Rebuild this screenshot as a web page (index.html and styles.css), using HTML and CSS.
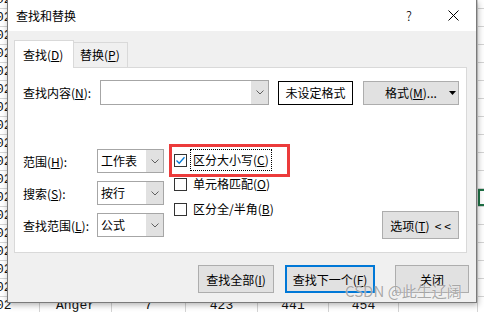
FILE: index.html
```html
<!DOCTYPE html>
<html lang="zh-CN">
<head>
    <meta charset="UTF-8">
    <title>查找和替换</title>
    <link rel="stylesheet" href="styles.css">
</head>
<body>
    <!-- Worksheet behind the dialog -->
    <div class="sheet">
        <div class="sheet-row"><div class="cell c0">02</div><div class="cell c1"></div><div class="cell c2"></div><div class="cell c3"></div><div class="cell c4"></div><div class="cell c5"></div><div class="cell c6"></div><div class="cell c7"></div></div>
        <div class="sheet-row"><div class="cell c0">02</div><div class="cell c1"></div><div class="cell c2"></div><div class="cell c3"></div><div class="cell c4"></div><div class="cell c5"></div><div class="cell c6"></div><div class="cell c7"></div></div>
        <div class="sheet-row"><div class="cell c0">02</div><div class="cell c1"></div><div class="cell c2"></div><div class="cell c3"></div><div class="cell c4"></div><div class="cell c5"></div><div class="cell c6"></div><div class="cell c7"></div></div>
        <div class="sheet-row"><div class="cell c0">02</div><div class="cell c1"></div><div class="cell c2"></div><div class="cell c3"></div><div class="cell c4"></div><div class="cell c5"></div><div class="cell c6"></div><div class="cell c7"></div></div>
        <div class="sheet-row"><div class="cell c0">02</div><div class="cell c1"></div><div class="cell c2"></div><div class="cell c3"></div><div class="cell c4"></div><div class="cell c5"></div><div class="cell c6"></div><div class="cell c7"></div></div>
        <div class="sheet-row"><div class="cell c0">02</div><div class="cell c1"></div><div class="cell c2"></div><div class="cell c3"></div><div class="cell c4"></div><div class="cell c5"></div><div class="cell c6"></div><div class="cell c7"></div></div>
        <div class="sheet-row"><div class="cell c0">02</div><div class="cell c1"></div><div class="cell c2"></div><div class="cell c3"></div><div class="cell c4"></div><div class="cell c5"></div><div class="cell c6"></div><div class="cell c7"></div></div>
        <div class="sheet-row"><div class="cell c0">02</div><div class="cell c1"></div><div class="cell c2"></div><div class="cell c3"></div><div class="cell c4"></div><div class="cell c5"></div><div class="cell c6"></div><div class="cell c7"></div></div>
        <div class="sheet-row"><div class="cell c0">02</div><div class="cell c1"></div><div class="cell c2"></div><div class="cell c3"></div><div class="cell c4"></div><div class="cell c5"></div><div class="cell c6"></div><div class="cell c7"></div></div>
        <div class="sheet-row"><div class="cell c0">02</div><div class="cell c1"></div><div class="cell c2"></div><div class="cell c3"></div><div class="cell c4"></div><div class="cell c5"></div><div class="cell c6"></div><div class="cell c7"></div></div>
        <div class="sheet-row"><div class="cell c0">02</div><div class="cell c1"></div><div class="cell c2"></div><div class="cell c3"></div><div class="cell c4"></div><div class="cell c5"></div><div class="cell c6"></div><div class="cell c7"></div></div>
        <div class="sheet-row"><div class="cell c0">02</div><div class="cell c1"></div><div class="cell c2"></div><div class="cell c3"></div><div class="cell c4"></div><div class="cell c5"></div><div class="cell c6"></div><div class="cell c7 selected"></div></div>
        <div class="sheet-row"><div class="cell c0">02</div><div class="cell c1"></div><div class="cell c2"></div><div class="cell c3"></div><div class="cell c4"></div><div class="cell c5"></div><div class="cell c6"></div><div class="cell c7"></div></div>
        <div class="sheet-row"><div class="cell c0">02</div><div class="cell c1"></div><div class="cell c2"></div><div class="cell c3"></div><div class="cell c4"></div><div class="cell c5"></div><div class="cell c6"></div><div class="cell c7"></div></div>
        <div class="sheet-row"><div class="cell c0">02</div><div class="cell c1"></div><div class="cell c2"></div><div class="cell c3"></div><div class="cell c4"></div><div class="cell c5"></div><div class="cell c6"></div><div class="cell c7"></div></div>
        <div class="sheet-row"><div class="cell c0">02</div><div class="cell c1"></div><div class="cell c2"></div><div class="cell c3"></div><div class="cell c4"></div><div class="cell c5"></div><div class="cell c6"></div><div class="cell c7"></div></div>
        <div class="sheet-row"><div class="cell c0">02</div><div class="cell c1"></div><div class="cell c2"></div><div class="cell c3"></div><div class="cell c4"></div><div class="cell c5"></div><div class="cell c6"></div><div class="cell c7"></div></div>
        <div class="sheet-row"><div class="cell c0">02</div><div class="cell c1">Anger</div><div class="cell c2">7</div><div class="cell c3">423</div><div class="cell c4">441</div><div class="cell c5">454</div><div class="cell c6"></div><div class="cell c7"></div></div>
    </div>

    <div class="dialog">
        <div class="titlebar">
            <span class="title">查找和替换</span>
            <span class="help">?</span>
            <span class="close">
                <svg width="11" height="11" viewBox="0 0 11 11"><path d="M0.5 0.5 L10.5 10.5 M10.5 0.5 L0.5 10.5" stroke="#000" stroke-width="1" fill="none"/></svg>
            </span>
        </div>
        <div class="dialog-body">
            <div class="tabs">
                <div class="tab active">查找(<u>D</u>)</div>
                <div class="tab">替换(<u>P</u>)</div>
            </div>
            <div class="panel">
                <div class="find-row">
                    <span class="field-label find-label">查找内容(<u>N</u>):</span>
                    <div class="combo combo-find">
                        <span class="combo-text"></span>
                        <span class="combo-btn"><svg width="8" height="5" viewBox="0 0 8 5"><polyline points="0.5,0.5 4,4 7.5,0.5" stroke="#606060" fill="none"/></svg></span>
                    </div>
                    <div class="format-preview">未设定格式</div>
                    <div class="btn btn-format">
                        <span>格式(<u>M</u>)...</span>
                        <svg width="7" height="4" viewBox="0 0 7 4"><polygon points="0,0 7,0 3.5,4" fill="#000"/></svg>
                    </div>
                </div>
                <div class="options">
                    <div class="fields">
                        <div class="field">
                            <span class="field-label">范围(<u>H</u>):</span>
                            <div class="combo combo-small">
                                <span class="combo-text">工作表</span>
                                <span class="combo-btn"><svg width="8" height="5" viewBox="0 0 8 5"><polyline points="0.5,0.5 4,4 7.5,0.5" stroke="#606060" fill="none"/></svg></span>
                            </div>
                        </div>
                        <div class="field">
                            <span class="field-label">搜索(<u>S</u>):</span>
                            <div class="combo combo-small">
                                <span class="combo-text">按行</span>
                                <span class="combo-btn"><svg width="8" height="5" viewBox="0 0 8 5"><polyline points="0.5,0.5 4,4 7.5,0.5" stroke="#606060" fill="none"/></svg></span>
                            </div>
                        </div>
                        <div class="field">
                            <span class="field-label">查找范围(<u>L</u>):</span>
                            <div class="combo combo-small">
                                <span class="combo-text">公式</span>
                                <span class="combo-btn"><svg width="8" height="5" viewBox="0 0 8 5"><polyline points="0.5,0.5 4,4 7.5,0.5" stroke="#606060" fill="none"/></svg></span>
                            </div>
                        </div>
                    </div>
                    <div class="checks">
                        <div class="check highlighted">
                            <span class="box"><svg width="11" height="11" viewBox="0 0 11 11"><polyline points="1.5,5.5 4.2,8.2 9.5,2.2" stroke="#0078d7" stroke-width="1.3" fill="none"/></svg></span>
                            <span class="check-label focused">区分大小写(<u>C</u>)</span>
                        </div>
                        <div class="check">
                            <span class="box"></span>
                            <span class="check-label">单元格匹配(<u>O</u>)</span>
                        </div>
                        <div class="check check-last">
                            <span class="box"></span>
                            <span class="check-label">区分全/半角(<u>B</u>)</span>
                        </div>
                    </div>
                    <div class="btn btn-options">选项(<u>T</u>)&nbsp; &lt; &lt;</div>
                </div>
            </div>
            <div class="actions">
                <div class="btn btn-action btn-all">查找全部(<u>I</u>)</div>
                <div class="btn btn-action btn-next">查找下一个(<u>F</u>)</div>
                <div class="btn btn-action btn-close">关闭</div>
            </div>
        </div>
    </div>

    <div class="watermark">CSDN @此生辽阔</div>
</body>
</html>
```

FILE: styles.css
```css
*, *::before, *::after {
    box-sizing: border-box;
}
body {
    margin: 0;
    width: 484px;
    height: 312px;
    overflow: hidden;
    position: relative;
    background-color: #fff;
    font-family: "Noto Sans CJK SC", sans-serif;
    font-size: 12px;
    color: #000;
}
u {
    text-underline-offset: 1px;
}

/* worksheet */
.sheet {
    margin-top: -9px;
    font-family: "Liberation Mono", monospace;
    font-size: 13px;
    color: #111;
}
.sheet-row {
    display: flex;
    height: 18px;
    border-bottom: 1px solid #d4d4d4;
}
.cell {
    flex-shrink: 0;
    border-right: 1px solid #d4d4d4;
    text-align: center;
    line-height: 17px;
    white-space: nowrap;
}
.c0 { width: 40px; text-align: left; text-indent: -4px; }
.c1 { width: 72px; }
.c2 { width: 74px; }
.c3 { width: 72px; }
.c4 { width: 71px; }
.c5 { width: 70px; }
.c6 { width: 79px; }
.c7 { width: 72px; }
.selected {
    box-shadow: inset 0 0 0 2px #1e7145;
}

/* dialog */
.dialog {
    position: absolute;
    left: 7px;
    top: 0;
    width: 470px;
    height: 303px;
    border: 1px solid #7a7a7a;
    border-top: none;
    box-shadow: 1px 2px 6px rgba(0, 0, 0, 0.3);
}
.titlebar {
    display: flex;
    align-items: center;
    height: 31px;
    padding: 0 8px;
    background-color: #fff;
}
.title {
    line-height: 16px;
}
.help {
    margin-left: auto;
    margin-right: 19px;
    width: 20px;
    text-align: center;
    font-size: 13px;
    font-weight: 300;
}
.close {
    display: flex;
    align-items: center;
    justify-content: center;
    width: 30px;
    height: 31px;
}
.dialog-body {
    height: 271px;
    padding: 9px 9px 0 6px;
    background-color: #f0f0f0;
}
.tabs {
    position: relative;
    z-index: 1;
    display: flex;
    align-items: flex-end;
    height: 28px;
    margin-bottom: -1px;
}
.tab {
    height: 25px;
    width: 54px;
    margin-bottom: 1px;
    padding-left: 6px;
    border: 1px solid #d9d9d9;
    border-left: none;
    border-bottom: none;
    line-height: 23px;
}
.tab.active {
    width: 60px;
    height: 28px;
    margin-bottom: 0;
    padding-left: 8px;
    border-left: 1px solid #d9d9d9;
    background-color: #fff;
    line-height: 27px;
}
.panel {
    width: 453px;
    height: 186px;
    padding: 12px 7px 0 8px;
    border: 1px solid #d9d9d9;
    background-color: #fff;
}
.find-row {
    display: flex;
    align-items: center;
    height: 25px;
}
.field-label {
    width: 74px;
    white-space: nowrap;
}
.find-label {
    width: 77px;
}
.combo {
    display: flex;
    border: 1px solid #a6a6a6;
    background-color: #fff;
}
.combo-find {
    width: 169px;
    height: 25px;
}
.combo-small {
    width: 67px;
    height: 24px;
}
.combo-text {
    flex: 1;
    padding-left: 3px;
    line-height: 22px;
}
.combo-btn {
    display: flex;
    align-items: center;
    justify-content: center;
    width: 17px;
    background-color: #e1e1e1;
}
.format-preview {
    display: flex;
    align-items: center;
    justify-content: center;
    width: 75px;
    height: 24px;
    margin-left: 9px;
    border: 1px solid #000;
}
.btn {
    display: flex;
    align-items: center;
    justify-content: center;
    border: 1px solid #adadad;
    background-color: #e1e1e1;
    white-space: nowrap;
}
.btn-format {
    justify-content: flex-start;
    width: 96px;
    height: 24px;
    margin-left: 10px;
    padding: 0 2px 0 21px;
}
.btn-format svg {
    margin-left: auto;
}
.options {
    display: flex;
    align-items: flex-start;
    margin-top: 43px;
}
.fields {
    display: flex;
    flex-direction: column;
    gap: 8px;
    margin-top: 1px;
}
.field {
    display: flex;
    align-items: center;
    height: 24px;
}
.checks {
    display: flex;
    flex-direction: column;
    margin-left: 10px;
}
.check {
    display: flex;
    align-items: center;
    height: 24px;
}
.check-last {
    margin-top: 1px;
}
.check.highlighted {
    position: relative;
}
.check.highlighted::after {
    content: "";
    position: absolute;
    top: -4px;
    left: -5px;
    width: 121px;
    height: 33px;
    border: 3px solid #ec3b3b;
}
.box {
    display: flex;
    width: 13px;
    height: 13px;
    border: 1px solid #333;
    background-color: #fff;
}
.check-label {
    height: 22px;
    margin-left: 3px;
    padding: 0 2px;
    border: 1px solid transparent;
    line-height: 20px;
    white-space: nowrap;
}
.check-label.focused {
    border: 1px dotted #000;
}
.btn-options {
    width: 77px;
    height: 28px;
    margin-left: auto;
    margin-top: 63px;
}
.actions {
    display: flex;
    justify-content: flex-end;
    margin-top: 12px;
    margin-right: -2px;
}
.btn-action {
    height: 28px;
}
.btn-all {
    width: 76px;
}
.btn-next {
    width: 90px;
    margin-left: 11px;
    border: 2px solid #0078d7;
}
.btn-close {
    width: 74px;
    margin-left: 20px;
}
.watermark {
    position: absolute;
    left: 345px;
    top: 281px;
    font-size: 15px;
    line-height: 20px;
    color: rgba(130, 130, 130, 0.7);
    text-shadow: 0 0 1px #fff;
    white-space: nowrap;
}
```
